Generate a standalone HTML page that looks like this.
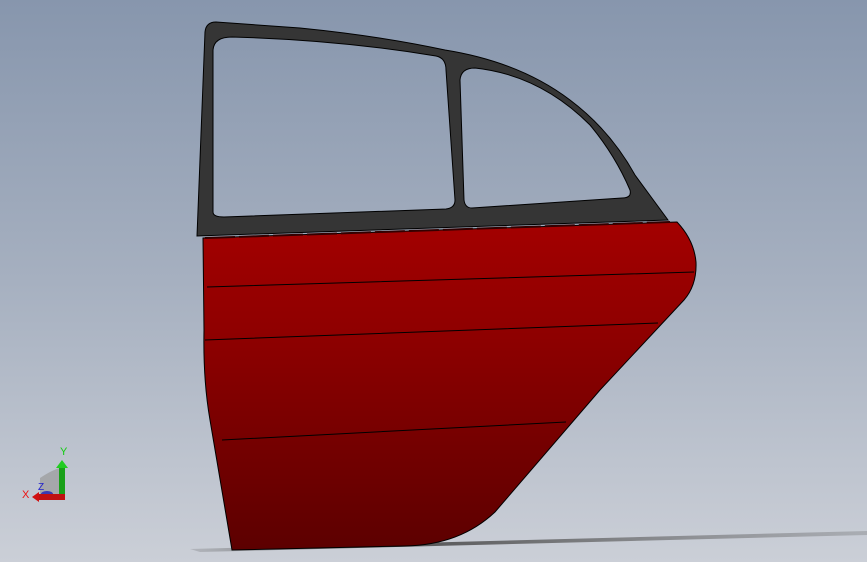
<!DOCTYPE html>
<html><head><style>
html,body{margin:0;padding:0;width:867px;height:562px;overflow:hidden}
body{background:linear-gradient(#8796ad,#a6b0c0 50%,#cbcfd7)}
svg{position:absolute;left:0;top:0}
</style></head><body>
<svg width="867" height="562" viewBox="0 0 867 562">
<defs>
<linearGradient id="r" x1="0" y1="0" x2="0" y2="1">
<stop offset="0" stop-color="#a30000"/><stop offset="0.35" stop-color="#8e0000"/><stop offset="1" stop-color="#5c0000"/>
</linearGradient>
<linearGradient id="sh" x1="0" y1="0" x2="1" y2="0">
<stop offset="0" stop-color="#555" stop-opacity="0.2"/><stop offset="0.3" stop-color="#444" stop-opacity="0.9"/><stop offset="1" stop-color="#666" stop-opacity="0.3"/>
</linearGradient>
</defs>
<path d="M190 549 L867 531 L867 535 L200 552 Z" fill="url(#sh)"/>
<path fill="#353535" fill-rule="evenodd" stroke="#000" stroke-width="1" d="
M197 236 L205 32 Q206 22 216 22 L300 28 Q380 36 445 50 Q520 62 570 100 Q610 130 635 175 L668 220 L197 236 Z
M213 212 L213 50 Q214 37 232 37 Q340 40 436 56 Q446 58 446 70 L455 200 Q455 208 446 209 L224 217 Q213 217 213 212 Z
M460 80 Q461 68 475 68 Q540 75 590 125 Q615 155 630 190 Q632 198 622 198 L472 208 Q465 208 464 200 Z"/>
<path fill="url(#r)" stroke="#000" stroke-width="1" d="M203 238 L677 222 Q694 240 696 262 Q697 285 684 300 L600 390 Q540 460 495 512 Q460 545 405 546 L232 550 Q222 490 210 420 Q203 380 204 330 Z"/>
<path d="M205 238 L670 222" stroke="#300" stroke-width="2" stroke-dasharray="30 4"/>
<path d="M207 287 L694 272 M205 340 L658 323 M222 440 L566 422" stroke="#000" stroke-width="1" fill="none"/>
<g>
<path d="M40 495 L40 478 Q52 470 60 468 L60 495 Z" fill="#9a9a9a" opacity="0.7"/>
<ellipse cx="47" cy="494" rx="6" ry="3" fill="#3a3ab0"/>
<rect x="59" y="466" width="6" height="32" fill="#19a019"/>
<path d="M56 468 L62 460 L68 468 Z" fill="#2c2"/>
<rect x="38" y="494" width="27" height="6" fill="#c01010"/>
<path d="M39 492 L32 497 L39 502 Z" fill="#d01010"/>
<text x="60" y="455" font-family="Liberation Sans, sans-serif" font-size="11" fill="#1c1">Y</text>
<text x="22" y="498" font-family="Liberation Sans, sans-serif" font-size="11" fill="#e11">X</text>
<text x="38" y="490" font-family="Liberation Sans, sans-serif" font-size="10" fill="#22c">Z</text>
</g>
</svg>
</body></html>
